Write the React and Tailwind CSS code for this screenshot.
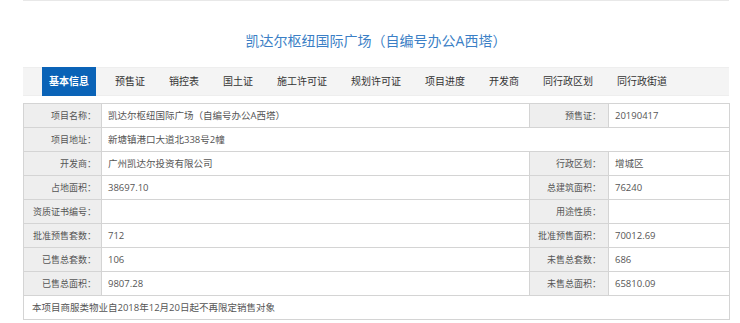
const tabs = ["基本信息", "预售证", "销控表", "国土证", "施工许可证", "规划许可证", "项目进度", "开发商", "同行政区划", "同行政街道"];

const rows = [
  ["项目名称：", "凯达尔枢纽国际广场（自编号办公A西塔）", "预售证：", "20190417"],
  ["项目地址：", "新塘镇港口大道北338号2幢"],
  ["开发商：", "广州凯达尔投资有限公司", "行政区划：", "增城区"],
  ["占地面积：", "38697.10", "总建筑面积：", "76240"],
  ["资质证书编号：", "", "用途性质：", ""],
  ["批准预售套数：", "712", "批准预售面积：", "70012.69"],
  ["已售总套数：", "106", "未售总套数：", "686"],
  ["已售总面积：", "9807.28", "未售总面积：", "65810.09"],
];

function App() {
  return (
    <div
      className="w-[740px] h-[323px] bg-white overflow-hidden"
      style={{ fontFamily: '"Open Sans", "Noto Sans CJK SC", sans-serif' }}
    >
      <div className="ml-[23px] w-[706px] border-t border-[#e8e8e8]">
        <h1 className="h-[66px] pt-[30px] text-center text-[14px] leading-[20px] text-[#3b7fc6]">
          凯达尔枢纽国际广场（自编号办公A西塔）
        </h1>

        <div className="flex h-[29px] items-stretch bg-[#f4f4f4] border-y border-[#eeeeee] pl-[19px]">
          {tabs.map((t, i) =>
            i === 0 ? (
              <div
                key={t}
                className="-my-px mr-[7px] flex items-center bg-[#0a63b7] px-[7px] text-[10px] font-bold text-white"
              >
                {t}
              </div>
            ) : (
              <div key={t} className="flex items-center px-[12px] text-[10px] text-[#333]">
                {t}
              </div>
            )
          )}
        </div>

        <table className="mt-[7px] w-[706px] table-fixed border-collapse border border-[#c8c8c8] text-[9.5px] leading-[12px] whitespace-nowrap">
          <colgroup>
            <col className="w-[78px]" />
            <col className="w-[428px]" />
            <col className="w-[79px]" />
            <col className="w-[121px]" />
          </colgroup>
          <tbody>
            {rows.map((r) => (
              <tr key={r[0]} className="h-[24px]">
                <td className="border border-[#d4d4d4] bg-[#eeeeee] pr-[5px] text-right text-[9px] text-[#555]">{r[0]}</td>
                <td colSpan={r.length === 2 ? 3 : 1} className="border border-[#d4d4d4] pl-[6px] text-[#555]">
                  {r[1]}
                </td>
                {r.length === 4 && (
                  <>
                    <td className="border border-[#d4d4d4] bg-[#eeeeee] pr-[7px] text-right text-[9px] text-[#555]">{r[2]}</td>
                    <td className="border border-[#d4d4d4] pl-[6px] text-[#555]">{r[3]}</td>
                  </>
                )}
              </tr>
            ))}
            <tr className="h-[24px]">
              <td colSpan={4} className="border border-[#d4d4d4] pl-[8px] text-[#555]">
                本项目商服类物业自2018年12月20日起不再限定销售对象
              </td>
            </tr>
          </tbody>
        </table>
      </div>
    </div>
  );
}

export default App;
